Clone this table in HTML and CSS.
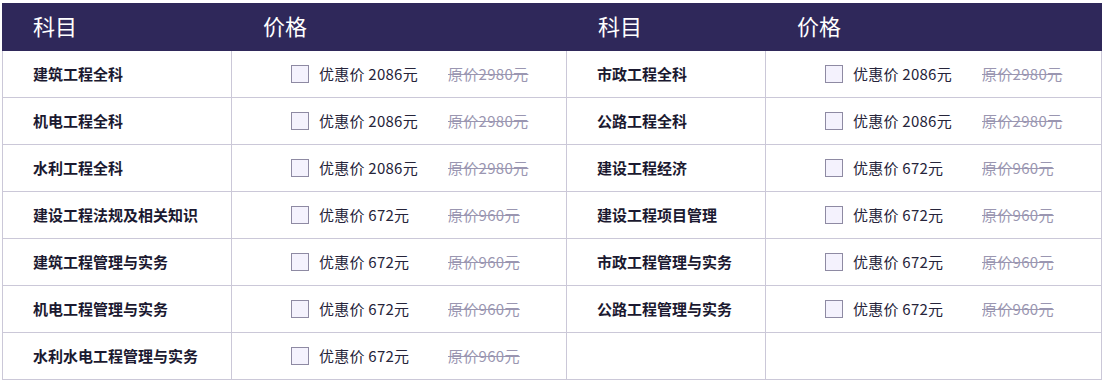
FILE: index.html
```html
<!DOCTYPE html>
<html lang="zh">
<head>
<meta charset="utf-8">
<link rel="stylesheet" href="styles.css">
</head>
<body>
<div class="table">
  <div class="row head">
    <div class="cell">科目</div>
    <div class="cell">价格</div>
    <div class="cell">科目</div>
    <div class="cell">价格</div>
  </div>

  <div class="row">
    <div class="cell subj">建筑工程全科</div>
    <div class="cell price"><span class="box"></span><span class="now">优惠价 2086元</span><span class="old">原价2980元</span></div>
    <div class="cell subj">市政工程全科</div>
    <div class="cell price"><span class="box"></span><span class="now">优惠价 2086元</span><span class="old">原价2980元</span></div>
  </div>
  <div class="row">
    <div class="cell subj">机电工程全科</div>
    <div class="cell price"><span class="box"></span><span class="now">优惠价 2086元</span><span class="old">原价2980元</span></div>
    <div class="cell subj">公路工程全科</div>
    <div class="cell price"><span class="box"></span><span class="now">优惠价 2086元</span><span class="old">原价2980元</span></div>
  </div>
  <div class="row">
    <div class="cell subj">水利工程全科</div>
    <div class="cell price"><span class="box"></span><span class="now">优惠价 2086元</span><span class="old">原价2980元</span></div>
    <div class="cell subj">建设工程经济</div>
    <div class="cell price"><span class="box"></span><span class="now">优惠价 672元</span><span class="old">原价960元</span></div>
  </div>
  <div class="row">
    <div class="cell subj">建设工程法规及相关知识</div>
    <div class="cell price"><span class="box"></span><span class="now">优惠价 672元</span><span class="old">原价960元</span></div>
    <div class="cell subj">建设工程项目管理</div>
    <div class="cell price"><span class="box"></span><span class="now">优惠价 672元</span><span class="old">原价960元</span></div>
  </div>
  <div class="row">
    <div class="cell subj">建筑工程管理与实务</div>
    <div class="cell price"><span class="box"></span><span class="now">优惠价 672元</span><span class="old">原价960元</span></div>
    <div class="cell subj">市政工程管理与实务</div>
    <div class="cell price"><span class="box"></span><span class="now">优惠价 672元</span><span class="old">原价960元</span></div>
  </div>
  <div class="row">
    <div class="cell subj">机电工程管理与实务</div>
    <div class="cell price"><span class="box"></span><span class="now">优惠价 672元</span><span class="old">原价960元</span></div>
    <div class="cell subj">公路工程管理与实务</div>
    <div class="cell price"><span class="box"></span><span class="now">优惠价 672元</span><span class="old">原价960元</span></div>
  </div>
  <div class="row">
    <div class="cell subj">水利水电工程管理与实务</div>
    <div class="cell price"><span class="box"></span><span class="now">优惠价 672元</span><span class="old">原价960元</span></div>
    <div class="cell subj"></div>
    <div class="cell price"></div>
  </div>
</div>
</body>
</html>
```

FILE: styles.css
```css
html, body {
  margin: 0;
  background: #ffffff;
}
body {
  padding: 3px 0 0 2px;
  font-family: "Noto Sans CJK SC", "Noto Sans", sans-serif;
}
.table {
  width: 1100px;
}
.row {
  display: grid;
  grid-template-columns: 229px 335px 199px 336px;
  border-left: 1px solid #cbc8d8;
}
.row .cell {
  box-sizing: border-box;
  height: 47px;
  border-right: 1px solid #cbc8d8;
  border-bottom: 1px solid #cbc8d8;
  display: flex;
  align-items: center;
  padding-left: 30px;
  padding-bottom: 2px;
}
.head {
  background: #2f285a;
  border-left: none;
  grid-template-columns: 230px 335px 199px 336px;
}
.head .cell {
  border: none;
  color: #ffffff;
  font-size: 22px;
  height: 48px;
  padding-left: 31px;
  padding-bottom: 5px;
}
.subj {
  font-size: 15px;
  font-weight: 700;
  color: #1b1930;
}
.price {
  font-size: 15px;
  color: #26243a;
  letter-spacing: 0.25px;
}
.row .cell.price {
  padding-left: 59px;
}
.box {
  width: 18px;
  height: 18px;
  box-sizing: border-box;
  border: 1.5px solid #8e8aa3;
  background: #f4f2fd;
  margin-right: 10px;
  margin-top: 2px;
  flex: none;
}
.now {
  width: 129px;
  flex: none;
}
.old {
  color: #9a96b1;
  text-decoration: line-through;
  letter-spacing: 0.3px;
}
```
